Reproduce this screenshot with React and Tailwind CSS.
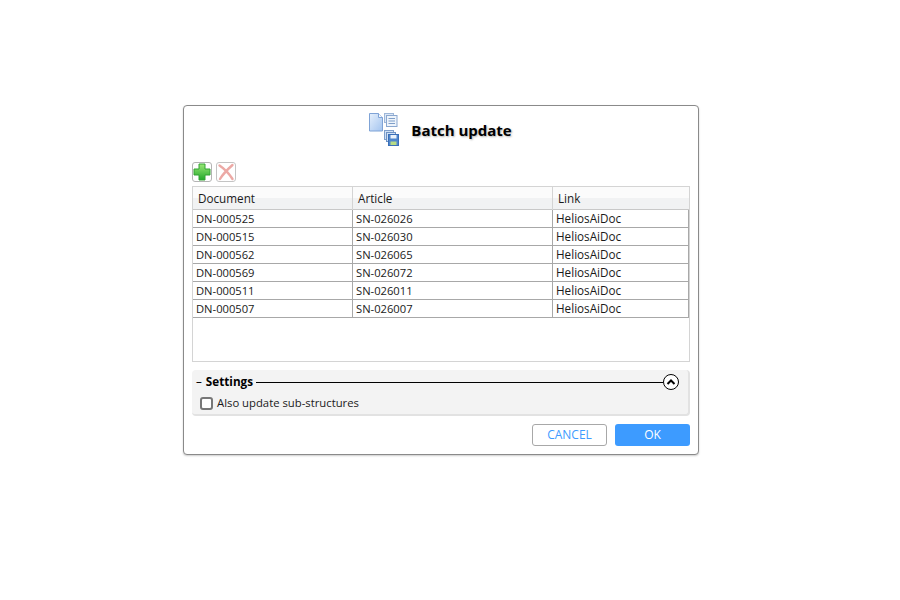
const rows = [
  ['DN-000525', 'SN-026026', 'HeliosAiDoc'],
  ['DN-000515', 'SN-026030', 'HeliosAiDoc'],
  ['DN-000562', 'SN-026065', 'HeliosAiDoc'],
  ['DN-000569', 'SN-026072', 'HeliosAiDoc'],
  ['DN-000511', 'SN-026011', 'HeliosAiDoc'],
  ['DN-000507', 'SN-026007', 'HeliosAiDoc'],
];

const BatchIcon = () => (
  <svg width="30" height="34" viewBox="0 0 30 34">
    <defs>
      <linearGradient id="page" x1="0" y1="0" x2="1" y2="1">
        <stop offset="0" stopColor="#e6f0fc" />
        <stop offset="1" stopColor="#a3c4ef" />
      </linearGradient>
    </defs>
    <path d="M0.5 0.5H9.5L13.5 4.5V18H0.5Z" fill="url(#page)" stroke="#7fa3d6" />
    <path d="M9.5 0.5V4.5H13.5" fill="#f4f8fd" stroke="#7fa3d6" />
    <rect x="15.5" y="0.5" width="9" height="9" fill="#dbe7f6" stroke="#9db6d8" />
    <rect x="17.5" y="2.5" width="10.5" height="11" fill="#eef4fb" stroke="#8ba8d0" />
    <path d="M19.5 5.5H26M19.5 8H26M19.5 10.5H26" stroke="#7f9fc9" />
    <rect x="15.5" y="17.5" width="9" height="9" fill="#cfe0f5" stroke="#7f9fcb" />
    <rect x="17.5" y="19.5" width="9" height="9" fill="#cfe0f5" stroke="#6f93c4" />
    <rect x="19.5" y="21.5" width="10" height="11" fill="#4f86cc" stroke="#3a6fb8" />
    <rect x="21.5" y="22" width="6" height="3.5" fill="#eaf2fb" />
    <rect x="21.5" y="28.5" width="6" height="3.5" fill="#b7dc86" />
  </svg>
);

const AddIcon = () => (
  <svg width="18" height="18" viewBox="0 0 18 18">
    <defs>
      <linearGradient id="plus" x1="0" y1="0" x2="0" y2="1">
        <stop offset="0" stopColor="#9ae876" />
        <stop offset="1" stopColor="#22a82a" />
      </linearGradient>
    </defs>
    <path d="M6 1H12V6H17V12H12V17H6V12H1V6H6Z" fill="url(#plus)" stroke="#35a335" strokeLinejoin="round" />
  </svg>
);

const RemoveIcon = () => (
  <svg width="18" height="18" viewBox="0 0 18 18">
    <path d="M2.5 2.5C7 5.5 12 10.5 15.5 16M15.5 2C11 6 6 11 3 16" fill="none" stroke="#eca9a5" strokeWidth="2.4" strokeLinecap="round" />
  </svg>
);

const App = () => {
  return (
    <div className="h-[600px] w-[900px] bg-white pl-[183px] pt-[105px] font-['Open_Sans','Noto_Sans',sans-serif] text-[11.7px] text-[#1a1a1a]">
      <div className="flex h-[350px] w-[516px] flex-col rounded-[4px] border border-[#8a8a8a] bg-white px-2 shadow-[0_1px_2px_rgba(0,0,0,0.2)]">
        <div className="flex h-[48px] items-center justify-center gap-[12px] pr-[1px]">
          <BatchIcon />
          <h1 className="text-[15px] font-bold text-black [text-shadow:1px_1px_2px_rgba(0,0,0,0.3)]">Batch update</h1>
        </div>

        <div className="mt-[8px] flex h-[21px] gap-[4px]">
          <button className="flex h-[20px] w-[20px] items-center justify-center rounded-[3px] border border-[#b4b4b4] bg-white"><AddIcon /></button>
          <button className="flex h-[20px] w-[20px] items-center justify-center rounded-[3px] border border-[#c4c4c4] bg-white"><RemoveIcon /></button>
        </div>

        <div className="mt-[3px] h-[176px] w-[498px] border border-[#d4d4d4]">
          <div className="grid h-[23px] grid-cols-[160px_200px_136px] border-b border-[#c8c8c8] bg-[linear-gradient(#fbfbfb_0_50%,#f1f2f3_50%)] leading-[23px]">
            <div className="border-r border-[#d4d4d4] pl-[5px]">Document</div>
            <div className="border-r border-[#d4d4d4] pl-[5px]">Article</div>
            <div className="pl-[5px]">Link</div>
          </div>
          {rows.map((row) => (
            <div key={row[0]} className="grid h-[18px] grid-cols-[160px_200px_136px] border-b border-[#a8a8a8] leading-[17px]">
              <div className="border-r border-[#a8a8a8] pl-[3px] text-[11.2px]">{row[0]}</div>
              <div className="border-r border-[#a8a8a8] pl-[3px] text-[11.2px]">{row[1]}</div>
              <div className="border-r border-[#a8a8a8] pl-[3px]">{row[2]}</div>
            </div>
          ))}
        </div>

        <div className="mt-[8px] h-[46px] w-[498px] rounded-[4px] border-r-2 border-b-2 border-[#e2e2e2] bg-[#f3f3f3] pl-1 pr-[9px]">
          <div className="flex h-[24px] items-center">
            <span className="text-black">–</span>
            <span className="ml-[4px] font-bold text-black">Settings</span>
            <div className="ml-[3px] h-px flex-1 bg-black"></div>
            <div className="flex h-4 w-4 items-center justify-center rounded-full border border-black bg-white">
              <svg width="10" height="8" viewBox="0 0 10 8">
                <path d="M1.5 6L5 2.5L8.5 6" fill="none" stroke="#000" strokeWidth="2" />
              </svg>
            </div>
          </div>
          <label className="ml-[4px] flex h-[19px] items-center gap-1">
            <span className="h-[13px] w-[13px] rounded-[3px] border-2 border-[#777] bg-white"></span>
            <span className="text-[11.3px]">Also update sub-structures</span>
          </label>
        </div>

        <div className="mt-[8px] flex w-[498px] justify-end gap-2">
          <button className="h-[22px] w-[75px] rounded-[3px] border border-[#a8a8a8] bg-white text-[12px] text-[#3d9bff]">CANCEL</button>
          <button className="h-[22px] w-[75px] rounded-[3px] bg-[#3d9bff] text-[12px] text-white">OK</button>
        </div>
      </div>
    </div>
  );
};

export default App;
